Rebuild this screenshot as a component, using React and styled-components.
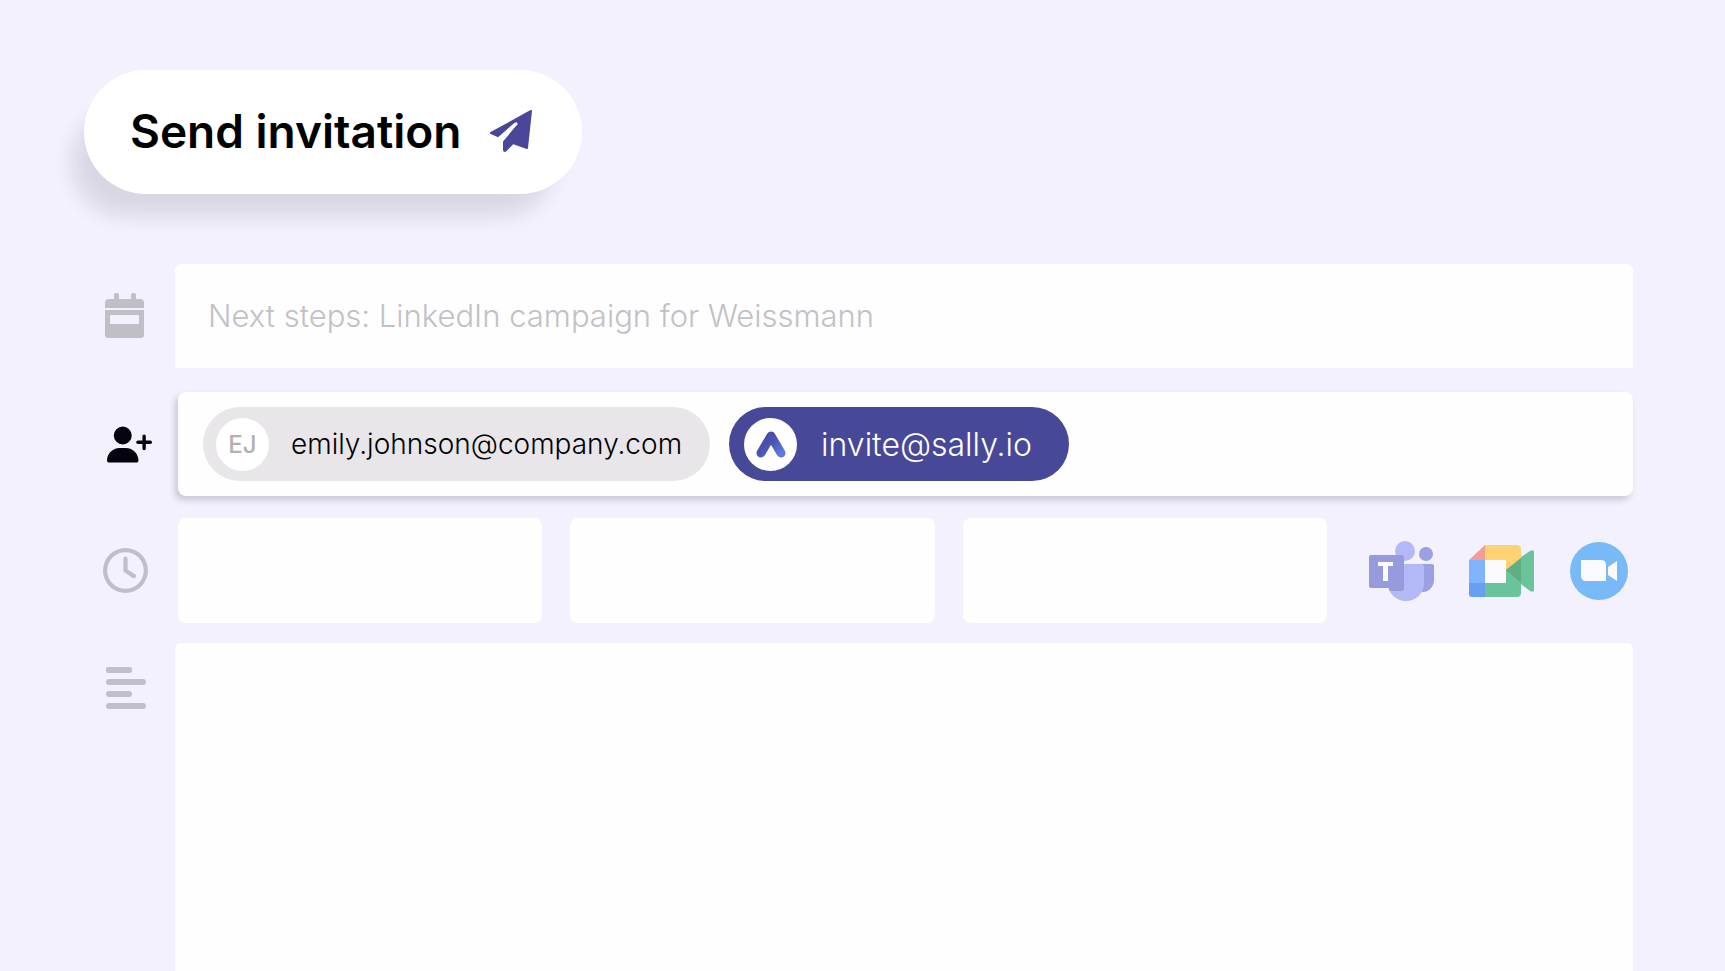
import React from "react";
import styled, { createGlobalStyle } from "styled-components";
import { FaRegClock, FaUserPlus } from "react-icons/fa6";

const App = () => {
  return (
    <>
      <GlobalStyle />
      <Page>
        <SendButton type="button">
          Send invitation
          <PlaneIcon />
        </SendButton>
        <Form>
          <Row $gap={24}>
            <IconLabel htmlFor="title" aria-label="Title">
              <CalendarIcon />
            </IconLabel>
            <TitleInput
              id="title"
              placeholder="Next steps: LinkedIn campaign for Weissmann"
            />
          </Row>
          <Row $gap={22}>
            <IconLabel as="span">
              <InviteIcon />
            </IconLabel>
            <Guests>
              <Chip>
                <Avatar>EJ</Avatar>
                emily.johnson@company.com
              </Chip>
              <Chip $primary>
                <Avatar>
                  <SallyLogo />
                </Avatar>
                invite@sally.io
              </Chip>
            </Guests>
          </Row>
          <Row $gap={20} $tall>
            <IconLabel htmlFor="date" aria-label="Date and time">
              <ClockIcon />
            </IconLabel>
            <Schedule>
              <Slot id="date" aria-label="Date" />
              <Slot aria-label="Start time" />
              <Slot aria-label="End time" />
              <Apps>
                <AppButton type="button" aria-label="Microsoft Teams">
                  <TeamsLogo />
                </AppButton>
                <AppButton type="button" aria-label="Google Meet">
                  <MeetLogo />
                </AppButton>
                <AppButton type="button" aria-label="Zoom">
                  <ZoomLogo />
                </AppButton>
              </Apps>
            </Schedule>
          </Row>
          <Row $grow>
            <IconLabel htmlFor="description" aria-label="Description" $top>
              <TextIcon />
            </IconLabel>
            <Description id="description" />
          </Row>
        </Form>
      </Page>
    </>
  );
};
export default App;

const PlaneIcon = () => (
  <svg width="44" height="44" viewBox="0 0 44 44">
    <path
      d="M42 2L2 24L9 27L25 13Q30 11 29 16L15 33V41Q15 42 16 42L24 34L38 39Z"
      fill="#4a4799"
      stroke="#4a4799"
      strokeWidth="2"
      strokeLinejoin="round"
    />
    <path d="M11 30L27 15" stroke="#ffffff" strokeWidth="3" strokeLinecap="round" />
  </svg>
);

const CalendarIcon = () => (
  <svg width="50" height="46" viewBox="0 0 50 46" fill="#c0bfc6">
    <rect x="11" y="0" width="5" height="10" rx="2" />
    <rect x="28" y="0" width="5" height="10" rx="2" />
    <path d="M6 6h31q4 0 4 4v5H2v-5q0-4 4-4z" />
    <path
      fillRule="evenodd"
      d="M2 17h39v25q0 3-3 3H5q-3 0-3-3zM8 22q-1 0-1 1v7q0 1 1 1h27q1 0 1-1v-7q0-1-1-1z"
    />
  </svg>
);

const InviteIcon = () => (
  <svg width="50" height="46" viewBox="0 0 50 46" color="#04030f">
    <FaUserPlus x="4" y="1" size={45} />
  </svg>
);

const ClockIcon = () => (
  <svg width="50" height="46" viewBox="0 0 50 46" color="#c0bfc9">
    <FaRegClock x="0" y="0" size={45} />
  </svg>
);

const TextIcon = () => (
  <svg width="50" height="42" viewBox="0 0 50 42" fill="#c0bfc9">
    <rect x="3" y="0" width="26" height="6" rx="2" />
    <rect x="3" y="12" width="40" height="6" rx="3" />
    <rect x="3" y="24" width="26" height="6" rx="3" />
    <rect x="3" y="36" width="40" height="6" rx="3" />
  </svg>
);

const SallyLogo = () => (
  <svg width="32" height="28" viewBox="0 0 32 28" fill="none">
    <defs>
      <linearGradient id="sally" x1="0" y1="0" x2="1" y2="1">
        <stop offset="0" stopColor="#4b46a0" />
        <stop offset="0.5" stopColor="#4a55b5" />
        <stop offset="1" stopColor="#5f78dc" />
      </linearGradient>
    </defs>
    <path
      d="M6 23L16 6L26 23"
      stroke="url(#sally)"
      strokeWidth="9"
      strokeLinecap="round"
      strokeLinejoin="round"
    />
  </svg>
);

const TeamsLogo = () => (
  <svg width="66" height="60" viewBox="0 0 66 60">
    <circle cx="57" cy="13" r="7" fill="#9c9fe2" />
    <path d="M48 23h15q2 0 2 2v15a12 12 0 0 1-17 10z" fill="#9c9fe2" />
    <circle cx="36" cy="10" r="10" fill="#b3b8f7" />
    <path d="M20 23h32q3 0 3 3v17a18 17 0 0 1-36 0z" fill="#b3b8f7" />
    <path d="M19 14h13q3 0 3 3v30q0 3-3 3H21q-2-3-2-7z" fill="#989bd6" />
    <rect x="0" y="14" width="33" height="33" rx="2" fill="#979add" />
    <path d="M9 21h15v4h-5v15h-5V25H9z" fill="#fbfaff" />
  </svg>
);

const MeetLogo = () => (
  <svg width="66" height="52" viewBox="0 0 66 52">
    <path d="M0 15L16 0v15z" fill="#f79c94" />
    <path d="M16 0h32q4 0 4 4v10L37 26V15H16z" fill="#ffd373" />
    <path d="M0 15h16v23H0z" fill="#80b4ff" />
    <path d="M0 38h16v14H3q-3 0-3-3z" fill="#689ff3" />
    <path d="M16 38h21V25l15-12v35q0 4-4 4H16z" fill="#6bc39c" />
    <path d="M52 12l9-6q4-2 4 1v38q0 3-4 1l-9-7z" fill="#6bc39c" />
    <path d="M37 25l15-12v25z" fill="#5eae86" />
    <path d="M16 15h21v23H16z" fill="#fbfaff" />
  </svg>
);

const ZoomLogo = () => (
  <svg width="60" height="60" viewBox="0 0 60 60">
    <circle cx="30" cy="30" r="29" fill="#78b9f8" />
    <path d="M12 19h20q5 0 5 5v16H17q-5 0-5-5z" fill="#fbfaff" />
    <path d="M39 26l9-6v20l-9-6z" fill="#fbfaff" />
  </svg>
);

const GlobalStyle = createGlobalStyle`
  * {
    box-sizing: border-box;
  }
  body {
    margin: 0;
    background: #f3f1fd;
    font-family: Inter, "Liberation Sans", sans-serif;
  }
  input, textarea, button {
    border: none;
    outline: none;
    font-family: inherit;
  }
  svg {
    display: block;
    flex-shrink: 0;
  }
`;
const Page = styled.main`
  display: flex;
  flex-direction: column;
  align-items: flex-start;
  min-height: 100vh;
  padding: 70px 92px 0 84px;
`;
const SendButton = styled.button`
  display: flex;
  align-items: center;
  gap: 28px;
  height: 124px;
  padding: 0 49px 2px 46px;
  border-radius: 62px;
  background: #ffffff;
  color: #000000;
  font-size: 46px;
  font-weight: 600;
  box-shadow: -20px 30px 20px -8px rgba(40, 35, 50, 0.12);
`;
const Form = styled.form`
  display: flex;
  flex-direction: column;
  flex: 1;
  width: 100%;
  margin-top: 70px;
`;
const Row = styled.div`
  display: flex;
  flex: ${({ $grow }) => ($grow ? "1" : "none")};
  min-height: ${({ $tall }) => ($tall ? "105px" : "104px")};
  margin-bottom: ${({ $gap }) => ($gap ? $gap : 0)}px;
`;
const IconLabel = styled.label`
  display: flex;
  flex-shrink: 0;
  align-items: ${({ $top }) => ($top ? "flex-start" : "center")};
  width: 91px;
  padding: ${({ $top }) => ($top ? "24px" : "0")} 0 0 19px;
`;
const TitleInput = styled.input`
  flex: 1;
  min-width: 0;
  padding: 0 33px 2px;
  border-radius: 6px 6px 0 0;
  background: #fefefe;
  font-size: 31px;
  font-weight: 300;
  &::placeholder {
    color: #c2c1c6;
    opacity: 1;
  }
`;
const Guests = styled.div`
  display: flex;
  flex: 1;
  align-items: center;
  gap: 19px;
  margin-left: 3px;
  padding: 0 25px;
  border-radius: 8px;
  background: #fefefe;
  box-shadow: -3px 4px 6px rgba(40, 35, 60, 0.2);
`;
const Chip = styled.div`
  display: flex;
  align-items: center;
  gap: ${({ $primary }) => ($primary ? "24px" : "22px")};
  height: 74px;
  padding: ${({ $primary }) => ($primary ? "0 37px 0 15px" : "0 28px 0 13px")};
  border-radius: 37px;
  background: ${({ $primary }) => ($primary ? "#484899" : "#e8e6e9")};
  color: ${({ $primary }) => ($primary ? "#ffffff" : "#000000")};
  font-size: ${({ $primary }) => ($primary ? "32px" : "28px")};
  font-weight: 300;
`;
const Avatar = styled.span`
  display: flex;
  align-items: center;
  justify-content: center;
  width: 53px;
  height: 53px;
  border-radius: 50%;
  background: #ffffff;
  color: #b1b0b3;
  font-size: 24px;
  font-weight: 500;
`;
const Schedule = styled.div`
  display: flex;
  flex: 1;
  min-width: 0;
  gap: 28px;
  margin-left: 3px;
`;
const Slot = styled.input`
  flex: 1;
  min-width: 0;
  border-radius: 8px;
  background: #fefefe;
`;
const Apps = styled.div`
  display: flex;
  align-items: center;
  gap: 34px;
  padding: 0 4px 0 14px;
`;
const AppButton = styled.button`
  padding: 0;
  background: none;
  cursor: pointer;
`;
const Description = styled.textarea`
  flex: 1;
  min-width: 0;
  padding: 34px;
  border-radius: 6px 6px 0 0;
  background: #fefefe;
  font-size: 31px;
  font-weight: 300;
  resize: none;
`;
